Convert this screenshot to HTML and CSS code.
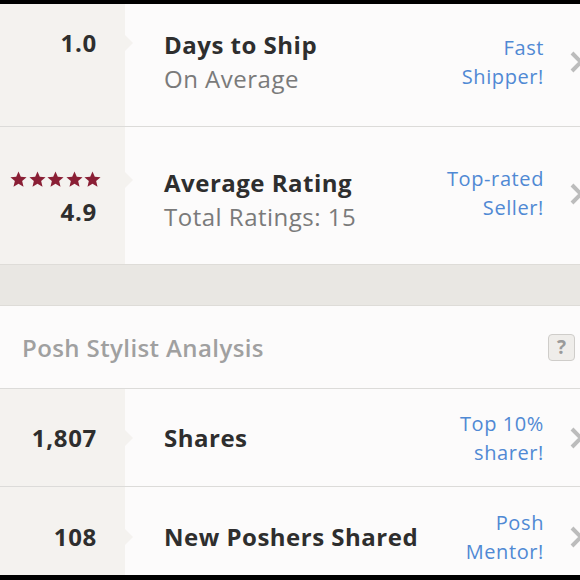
FILE: index.html
```html
<!DOCTYPE html>
<html>
<head>
<meta charset="utf-8">
<link rel="stylesheet" href="styles.css">
</head>
<body>
<div class="screen">
  <div class="row row-ship">
    <div class="left"><div class="num">1.0</div></div>
    <div class="mid">
      <div class="title">Days to Ship</div>
      <div class="sub">On Average</div>
    </div>
    <div class="right">Fast<br>Shipper!</div>
    <svg class="chev" viewBox="0 0 16 24" width="16" height="24"><polyline points="3,3 12,12 3,21" /></svg>
  </div>
  <div class="row row-rating">
    <div class="left">
      <div class="stars">
        <svg viewBox="0 0 20 20"><polygon points="10,0.5 12.7,6.8 19.5,7.3 14.3,11.8 15.9,18.6 10,15 4.1,18.6 5.7,11.8 0.5,7.3 7.3,6.8"/></svg>
        <svg viewBox="0 0 20 20"><polygon points="10,0.5 12.7,6.8 19.5,7.3 14.3,11.8 15.9,18.6 10,15 4.1,18.6 5.7,11.8 0.5,7.3 7.3,6.8"/></svg>
        <svg viewBox="0 0 20 20"><polygon points="10,0.5 12.7,6.8 19.5,7.3 14.3,11.8 15.9,18.6 10,15 4.1,18.6 5.7,11.8 0.5,7.3 7.3,6.8"/></svg>
        <svg viewBox="0 0 20 20"><polygon points="10,0.5 12.7,6.8 19.5,7.3 14.3,11.8 15.9,18.6 10,15 4.1,18.6 5.7,11.8 0.5,7.3 7.3,6.8"/></svg>
        <svg viewBox="0 0 20 20"><polygon points="10,0.5 12.7,6.8 19.5,7.3 14.3,11.8 15.9,18.6 10,15 4.1,18.6 5.7,11.8 0.5,7.3 7.3,6.8"/></svg>
      </div>
      <div class="num">4.9</div>
    </div>
    <div class="mid">
      <div class="title">Average Rating</div>
      <div class="sub">Total Ratings: 15</div>
    </div>
    <div class="right">Top-rated<br>Seller!</div>
    <svg class="chev" viewBox="0 0 16 24" width="16" height="24"><polyline points="3,3 12,12 3,21" /></svg>
  </div>
  <div class="band"></div>
  <div class="section-head">
    <div class="section-title">Posh Stylist Analysis</div>
    <div class="help">?</div>
  </div>
  <div class="row row-shares">
    <div class="left"><div class="num">1,807</div></div>
    <div class="mid">
      <div class="title">Shares</div>
    </div>
    <div class="right">Top 10%<br>sharer!</div>
    <svg class="chev" viewBox="0 0 16 24" width="16" height="24"><polyline points="3,3 12,12 3,21" /></svg>
  </div>
  <div class="row row-mentor">
    <div class="left"><div class="num">108</div></div>
    <div class="mid">
      <div class="title">New Poshers Shared</div>
    </div>
    <div class="right">Posh<br>Mentor!</div>
    <svg class="chev" viewBox="0 0 16 24" width="16" height="24"><polyline points="3,3 12,12 3,21" /></svg>
  </div>
</div>
</body>
</html>
```

FILE: styles.css
```css
html, body {
  margin: 0;
  padding: 0;
  background: #000;
}

.screen {
  margin-top: 4px;
  height: 571px;
  width: 580px;
  overflow: hidden;
  background: #fcfbfb;
  font-family: "Open Sans", "Lato", sans-serif;
}

.row {
  display: flex;
  align-items: stretch;
  border-bottom: 1px solid #dcdbd9;
  position: relative;
}

.row-ship { height: 122px; }
.row-rating { height: 137px; border-bottom: none; }
.row-shares { height: 97px; }
.row-mentor { height: 100px; border-bottom: none; }

.left {
  width: 125px;
  flex: none;
  background: #f4f2ef;
  box-sizing: border-box;
  padding-right: 28px;
  display: flex;
  flex-direction: column;
  align-items: flex-end;
  justify-content: center;
  position: relative;
}

.left::after {
  content: "";
  position: absolute;
  right: -8px;
  top: var(--arrow-top, 50%);
  margin-top: -8px;
  border-left: 8px solid #f4f2ef;
  border-top: 8px solid transparent;
  border-bottom: 8px solid transparent;
}

.row-ship .left::after { --arrow-top: 39px; }
.row-rating .left::after { --arrow-top: 53px; }

.num {
  font-size: 24px;
  font-weight: 700;
  color: #2e2e2e;
  line-height: 30px;
  letter-spacing: 0.7px;
}

.row-ship .left { justify-content: flex-start; padding-top: 24px; }
.row-rating .left { justify-content: flex-start; padding-top: 44px; padding-right: 24px; }
.row-rating .num { margin-top: 9px; margin-right: 4px; }

.stars {
  display: flex;
  gap: 1.5px;
}
.stars svg {
  width: 17px;
  height: 17px;
  fill: #8a1f35;
}

.mid {
  flex: 1;
  padding-left: 39px;
  display: flex;
  flex-direction: column;
  justify-content: center;
}

.row-ship .mid { justify-content: flex-start; padding-top: 24px; }
.row-rating .mid { justify-content: flex-start; padding-top: 39px; }

.title {
  font-size: 24px;
  font-weight: 700;
  color: #2e2e2e;
  line-height: 34px;
  letter-spacing: 0.5px;
}

.sub {
  font-size: 24px;
  color: #7a7a7a;
  line-height: 34px;
  letter-spacing: 0.5px;
}

.right {
  flex: none;
  text-align: right;
  font-size: 20px;
  line-height: 29px;
  color: #5089d4;
  padding-right: 36px;
  display: flex;
  align-items: center;
  letter-spacing: 0.6px;
}

.row-ship .right { align-items: flex-start; padding-top: 29px; }
.row-rating .right { align-items: flex-start; padding-top: 37px; }

.chev {
  position: absolute;
  right: -5px;
  top: 50%;
  margin-top: -12px;
  fill: none;
  stroke: #bcbcbc;
  stroke-width: 4;
}

.row-ship .chev { top: 58px; }
.row-rating .chev { top: 67px; }

.band {
  height: 40px;
  background: #e9e7e3;
  border-top: 1px solid #dedcd8;
  border-bottom: 1px solid #dedcd8;
}

.section-head {
  height: 82px;
  display: flex;
  align-items: center;
  justify-content: space-between;
  padding: 0 5px 0 22px;
  border-bottom: 1px solid #dcdbd9;
}

.section-title {
  font-size: 24px;
  color: #a0a0a0;
  font-weight: 600;
  letter-spacing: 0.4px;
}

.help {
  width: 27px;
  height: 27px;
  box-sizing: border-box;
  border: 1px solid #cfcdca;
  border-radius: 4px;
  background: #efedea;
  color: #9a9a9a;
  font-weight: 700;
  font-size: 19px;
  line-height: 25px;
  text-align: center;
}
```
